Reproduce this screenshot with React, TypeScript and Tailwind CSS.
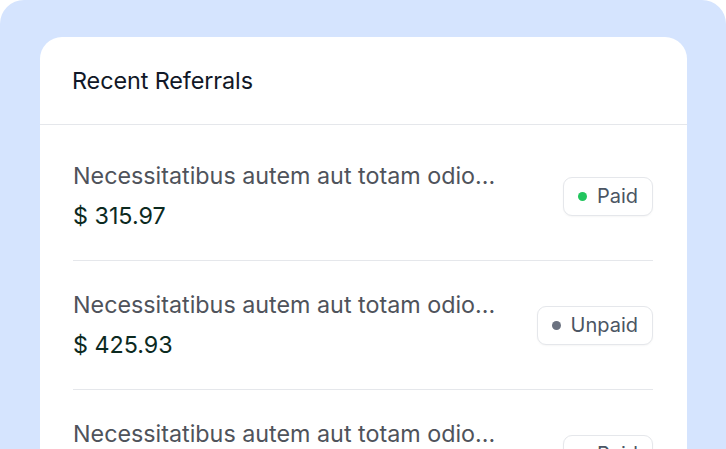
import React from "react";

const referrals = [
  { title: "Necessitatibus autem aut totam odio...", amount: "$ 315.97", paid: true },
  { title: "Necessitatibus autem aut totam odio...", amount: "$ 425.93", paid: false },
  { title: "Necessitatibus autem aut totam odio...", amount: "$ 120.40", paid: true },
];

function StatusBadge(props: { paid: boolean }) {
  const { paid } = props;

  return <div className="flex items-center gap-[10px] h-[39px] px-[14px] rounded-[9px] border border-[#e5e7eb] bg-white shadow-[0_1px_2px_rgba(0,0,0,0.04)]">
    <span className={paid ? "size-[9px] rounded-full bg-[#22c55e]" : "size-[9px] rounded-full bg-[#6b7280]"} />
    <span className="text-[20px] leading-none text-[#4b5563]">{paid ? "Paid" : "Unpaid"}</span>
  </div>;
}

export default function App() {
  return <div className="h-[449px] w-[726px] overflow-hidden bg-white" style={{ fontFamily: "Inter, 'Noto Sans', sans-serif" }}>
    <div className="h-full w-full rounded-t-[24px] bg-[#d5e4fe] pt-[37px] pl-[40px] pr-[39px]">
      <div className="h-full rounded-t-[22px] bg-white">
        <div className="h-[88px] flex items-center pl-[32px] pr-[33px] border-b border-[#e5e7eb]">
          <div className="text-[23.4px] text-[#111827] tracking-[-0.1px]">Recent Referrals</div>
        </div>
        <div className="pt-[7px] pl-[33px] pr-[34px]">
          {referrals.map((r, i) => <div key={i} className="flex items-center justify-between gap-4 py-[30px] border-b border-[#e5e7eb]">
            <div className="flex flex-col gap-[12px] min-w-0">
              <div className="text-[23.3px] leading-[28px] text-[#4f535b] truncate">{r.title}</div>
              <div className="text-[23.3px] leading-[28px] text-[#0c2a1f]">{r.amount}</div>
            </div>
            <StatusBadge paid={r.paid} />
          </div>)}
        </div>
      </div>
    </div>
  </div>;
}
